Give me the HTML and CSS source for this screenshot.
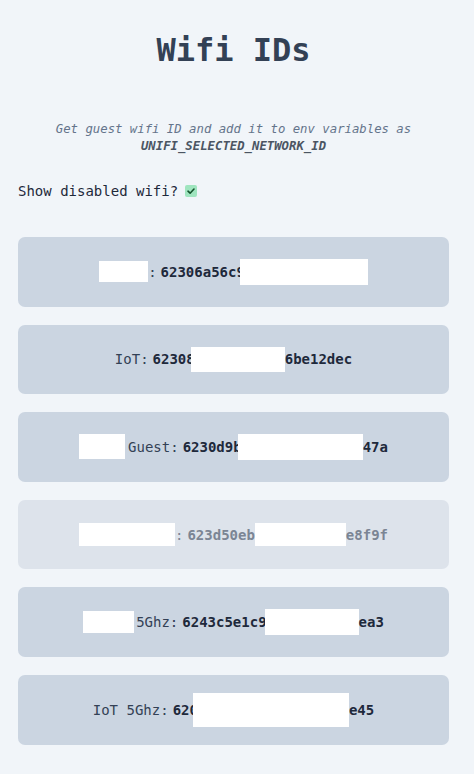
FILE: index.html
```html
<!DOCTYPE html>
<html lang="en">
<head>
<meta charset="utf-8">
<title>Wifi IDs</title>
<link rel="stylesheet" href="styles.css">
</head>
<body>
<main class="page">
  <h1 class="title">Wifi IDs</h1>
  <p class="intro">Get guest wifi ID and add it to env variables as <b>UNIFI_SELECTED_NETWORK_ID</b></p>
  <label class="toggle">Show disabled wifi? <span class="check"><svg viewBox="0 0 12 12" width="12" height="12"><path d="M3 6.2 L5.1 8.2 L9 4" fill="none" stroke="#14532d" stroke-width="1.6" stroke-linecap="round" stroke-linejoin="round"/></svg></span></label>

  <ul class="list">
    <li class="card">
      <span class="name"><span class="redact r-w49 r-h21"></span>:</span>
      <b class="id">62306a56c9<span class="redact r-w128 r-h26 r-ml5"></span></b>
    </li>
    <li class="card">
      <span class="name">IoT:</span>
      <b class="id">62308<span class="redact r-w94 r-h25 r-ml4"></span>6be12dec</b>
    </li>
    <li class="card">
      <span class="name"><span class="redact r-w46 r-h25 r-mr3"></span>Guest:</span>
      <b class="id">6230d9b<span class="redact r-w125 r-h26 r-ml4"></span>47a</b>
    </li>
    <li class="card card-disabled">
      <span class="name"><span class="redact r-w96 r-h23"></span>:</span>
      <b class="id">623d50eb<span class="redact r-w91 r-h23"></span>e8f9f</b>
    </li>
    <li class="card">
      <span class="name"><span class="redact r-w51 r-h22 r-mr2"></span>5Ghz:</span>
      <b class="id">6243c5e1c9<span class="redact r-w94 r-h26 r-ml2"></span>ea3</b>
    </li>
    <li class="card">
      <span class="name">IoT 5Ghz:</span>
      <b class="id">620<span class="redact r-w156 r-h34 r-ml5"></span>e45</b>
    </li>
  </ul>
</main>
</body>
</html>
```

FILE: styles.css
```css
html, body {
  margin: 0;
  padding: 0;
  background: #f1f5f9;
}

body {
  font-family: "DejaVu Sans Mono", "Liberation Mono", monospace;
  color: #1e293b;
}

.page {
  padding: 30px 25px 30px 18px;
}

.title {
  margin: 0;
  font-size: 32px;
  line-height: 40px;
  font-weight: bold;
  text-align: center;
  color: #334155;
}

.intro {
  margin: 51px 0 0;
  font-size: 12.3px;
  line-height: 17px;
  font-style: italic;
  text-align: center;
  color: #64748b;
}

.intro b {
  display: block;
  color: #4b5563;
}

.toggle {
  display: flex;
  align-items: center;
  gap: 7px;
  margin-top: 26px;
  font-size: 14px;
  line-height: 20px;
  color: #1e293b;
}

.check {
  display: inline-flex;
  width: 12px;
  height: 12px;
  border-radius: 2px;
  background: #9fe5bf;
}

.list {
  list-style: none;
  margin: 36px 0 0;
  padding: 0;
  display: flex;
  flex-direction: column;
  gap: 18px;
}

.card {
  height: 69.6px;
  display: flex;
  align-items: center;
  justify-content: center;
  gap: 4px;
  background: #cbd5e1;
  border-radius: 7px;
  font-size: 14px;
  line-height: 20px;
  color: #334155;
}

.card-disabled {
  background: #dde3eb;
  color: #7b8594;
}

.name,
.id {
  display: flex;
  align-items: center;
  white-space: pre;
}

.id {
  font-weight: bold;
  color: #1e293b;
}

.card-disabled .id {
  color: #7b8594;
}

.redact {
  display: inline-block;
  background: #ffffff;
  flex: none;
}

.r-w46 { width: 46px; }
.r-w49 { width: 49px; }
.r-w51 { width: 51px; }
.r-w91 { width: 91px; }
.r-w94 { width: 94px; }
.r-w96 { width: 96px; }
.r-w125 { width: 125px; }
.r-w128 { width: 128px; }
.r-w156 { width: 156px; }

.r-h21 { height: 21px; }
.r-h22 { height: 22px; }
.r-h23 { height: 23px; }
.r-h25 { height: 25px; }
.r-h26 { height: 26px; }
.r-h34 { height: 34px; }

.r-ml2 { margin-left: -2px; }
.r-ml4 { margin-left: -4px; }
.r-ml5 { margin-left: -5px; }
.r-mr2 { margin-right: 2px; }
.r-mr3 { margin-right: 3px; }
```
